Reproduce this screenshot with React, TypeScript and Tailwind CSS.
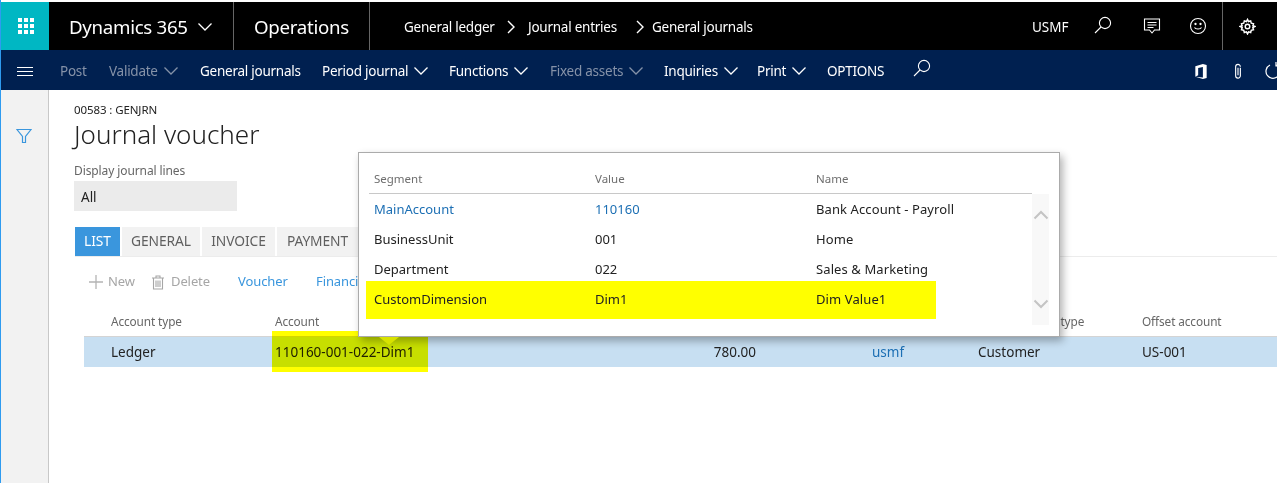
import { ReactNode } from "react";

const FONT = "font-['Noto_Sans','Open_Sans',sans-serif]";

function Chevron({ className = "", weight = 1.3 }: { className?: string; weight?: number }) {
  return (
    <svg viewBox="0 0 16 10" fill="none" stroke="currentColor" strokeWidth={weight} className={`w-[16px] h-[10px] ${className}`}>
      <polyline points="1.5,1.5 8,8 14.5,1.5" />
    </svg>
  );
}

function CrumbArrow() {
  return (
    <svg viewBox="0 0 8 14" fill="none" stroke="#fff" strokeWidth="1.4" className="w-[8px] h-[14px]">
      <polyline points="1,1 7,7 1,13" />
    </svg>
  );
}

function SearchIcon() {
  return (
    <svg viewBox="0 0 18 18" fill="none" stroke="#fff" strokeWidth="1.1" className="w-[18px] h-[18px]">
      <circle cx="11" cy="7" r="5.6" />
      <line x1="7" y1="11" x2="1" y2="17" />
    </svg>
  );
}

function NavItem({ w, dim, arrow, children }: { w: string; dim?: boolean; arrow?: boolean; children: ReactNode }) {
  return (
    <div className={`${w} flex items-center gap-[5px] shrink-0 ${dim ? "text-[#8592a8]" : "text-white"}`}>
      <span>{children}</span>
      {arrow && <Chevron />}
    </div>
  );
}

function TopBar() {
  return (
    <div className="h-[48px] mt-[2px] bg-black flex items-center text-white">
      <div className="w-[49px] h-full bg-[#00b7c3] flex items-center justify-center shrink-0">
        <div className="grid grid-cols-3 gap-[2px] ml-[3px]">
          {[0, 1, 2, 3, 4, 5, 6, 7, 8].map((i) => (
            <div key={i} className="w-[4px] h-[4px] bg-white" />
          ))}
        </div>
      </div>
      <div className="w-[185px] h-full border-r border-[#666] pl-[20px] pt-[2px] flex items-center gap-[9px] shrink-0">
        <span className="text-[18.7px] tracking-[-0.3px]">Dynamics 365</span>
        <Chevron />
      </div>
      <div className="w-[136px] h-full border-r border-[#666] pl-[20px] pt-[2px] flex items-center text-[18.7px] tracking-[-0.3px] shrink-0">
        Operations
      </div>
      <div className="pl-[34px] pt-[2px] flex items-center text-[13.5px] tracking-[-0.25px]">
        <span className="w-[103px]">General ledger</span>
        <CrumbArrow />
        <span className="w-[108px] pl-[13px] box-content">Journal entries</span>
        <div className="w-[16px]">
          <CrumbArrow />
        </div>
        <span>General journals</span>
      </div>
      <div className="ml-auto flex items-center h-full">
        <span className="text-[13.5px] w-[62px] pt-[2px]">USMF</span>
        <div className="w-[49px] -mt-[2px]">
          <SearchIcon />
        </div>
        <svg viewBox="0 0 18 18" fill="none" stroke="#fff" strokeWidth="1.1" className="w-[18px] h-[18px] mr-[28px]">
          <path d="M1.5 2h15v11h-5l-2.5 3-2.5-3h-5z" />
          <path d="M4.5 5.5h9M4.5 8h9M4.5 10.5h6" />
        </svg>
        <svg viewBox="0 0 18 18" fill="none" stroke="#fff" strokeWidth="1.1" className="w-[18px] h-[18px]">
          <circle cx="9" cy="9" r="7.5" />
          <circle cx="6.5" cy="7" r="0.6" fill="#fff" />
          <circle cx="11.5" cy="7" r="0.6" fill="#fff" />
          <path d="M5.5 10.5c1 2 6 2 7 0" />
        </svg>
        <div className="w-[55px] h-full ml-[15px] border-l border-[#666] flex items-center pl-[16px]">
          <svg viewBox="0 0 24 24" fill="none" stroke="#fff" strokeWidth="2" className="w-[17px] h-[17px]">
            <circle cx="12" cy="12" r="3.2" />
            <path d="M12 2l1.5 3 3-1 .8 3.2 3.2.8-1 3 3 1-3 1.5 1 3-3.2.8-.8 3.2-3-1-1.5 3-1.5-3-3 1-.8-3.2-3.2-.8 1-3-3-1.5 3-1-1-3 3.2-.8.8-3.2 3 1z" />
          </svg>
        </div>
      </div>
    </div>
  );
}

function NavBar() {
  return (
    <div className="h-[40px] bg-[#002050] flex items-center pt-[2px] text-[13.5px] tracking-[-0.25px] overflow-hidden">
      <div className="w-[60px] pl-[17px] shrink-0">
        <div className="w-[16px] flex flex-col gap-[3px]">
          <div className="h-px bg-white" />
          <div className="h-px bg-white" />
          <div className="h-px bg-white" />
        </div>
      </div>
      <NavItem w="w-[49px]" dim>Post</NavItem>
      <NavItem w="w-[91px]" dim arrow>Validate</NavItem>
      <NavItem w="w-[122px]">General journals</NavItem>
      <NavItem w="w-[127px]" arrow>Period journal</NavItem>
      <NavItem w="w-[101px]" arrow>Functions</NavItem>
      <NavItem w="w-[114px]" dim arrow>Fixed assets</NavItem>
      <NavItem w="w-[93px]" arrow>Inquiries</NavItem>
      <NavItem w="w-[70px]" arrow>Print</NavItem>
      <NavItem w="w-[86px]">OPTIONS</NavItem>
      <div className="w-[281px] -mt-[6px] shrink-0">
        <SearchIcon />
      </div>
      <svg viewBox="0 0 14 18" fill="#fff" className="w-[14px] h-[17px] shrink-0">
        <path d="M1 3.5L9 1l4 1.2v13.6L9 17l-8-2.5 8 .9V4.2L4 5.4v7.6L1 14.5z" />
      </svg>
      <svg viewBox="0 0 8 18" fill="none" stroke="#fff" strokeWidth="1.2" className="w-[8px] h-[17px] ml-[26px] shrink-0">
        <path d="M6.5 5v8.5a2.5 2.5 0 0 1-5 0V4a2.5 2.5 0 0 1 5 0" />
        <path d="M4 5v8" />
      </svg>
      <svg viewBox="0 0 18 18" fill="none" stroke="#fff" strokeWidth="1.2" className="w-[18px] h-[18px] ml-[22px] shrink-0">
        <path d="M12 3a7 7 0 1 1-6 0" />
        <path d="M12 0v4h4" />
      </svg>
    </div>
  );
}

function Tab({ w, active, children }: { w: string; active?: boolean; children: ReactNode }) {
  return (
    <div
      className={`${w} h-[29px] flex items-center justify-center text-[13.8px] tracking-[-0.1px] shrink-0 ${
        active ? "bg-[#3a96dd] text-white" : "bg-[#f2f2f2] text-[#5f5f5f]"
      }`}
    >
      {children}
    </div>
  );
}

const popupRows = [
  { seg: "MainAccount", val: "110160", name: "Bank Account - Payroll", link: true },
  { seg: "BusinessUnit", val: "001", name: "Home" },
  { seg: "Department", val: "022", name: "Sales & Marketing" },
  { seg: "CustomDimension", val: "Dim1", name: "Dim Value1", mark: true },
];

function SegmentPopup() {
  return (
    <div className="absolute left-[358px] top-[152px] w-[702px] h-[185px] bg-white border border-[#ababab] shadow-[3px_4px_8px_rgba(0,0,0,0.3)] z-20 pt-[15px] pl-[10px] text-[13px]">
      <div className="w-[663px] h-[26px] pt-[2px] border-b border-[#c8c8c8] grid grid-cols-[221px_221px_1fr] pl-[5px] text-[11.5px] text-[#6e6e6e]">
        <span>Segment</span>
        <span>Value</span>
        <span>Name</span>
      </div>
      <div className="flex">
        <div className="w-[663px] relative pt-[1px]">
          {popupRows.map((r) => (
            <div key={r.seg} className="h-[30px] grid grid-cols-[221px_221px_1fr] items-center pl-[5px] text-[#222]">
              <span className={r.link ? "text-[#1c6fb4]" : ""}>{r.seg}</span>
              <span className={r.link ? "text-[#1c6fb4]" : ""}>{r.val}</span>
              <span className="tracking-[0.1px]">{r.name}</span>
              {r.mark && <div className="absolute left-[-3px] top-[87px] w-[570px] h-[38px] bg-[#ffff00] -z-10" />}
            </div>
          ))}
        </div>
        <div className="w-[17px] h-[131px] bg-[#f8f8f8] flex flex-col items-center justify-between py-[16px] text-[#c4c4c4]">
          <Chevron className="rotate-180 w-[13px]" weight={2} />
          <Chevron className="w-[13px]" weight={2} />
        </div>
      </div>
    </div>
  );
}

export default function App() {
  return (
    <div className={`w-[1277px] h-[483px] overflow-hidden bg-white relative ${FONT}`}>
      <TopBar />
      <NavBar />
      <div className="flex h-[393px]">
        <div className="w-[49px] bg-[#f2f2f2] border-r border-[#c8c8c8] flex justify-center pt-[38px] shrink-0">
          <svg viewBox="0 0 16 16" fill="none" stroke="#3a96dd" strokeWidth="1.2" className="w-[16px] h-[16px]">
            <path d="M1 1.5h14L9.5 8.5V14.5h-3V8.5z" />
          </svg>
        </div>
        <div className="flex-1 min-w-0 pl-[25px] pt-[12px]">
          <div className="text-[11.5px] leading-[15px] text-[#222] tracking-[-0.1px]">00583 : GENJRN</div>
          <div className="mt-[2px] text-[26px] leading-[30px] text-[#222] font-light">Journal voucher</div>
          <div className="mt-[14px] text-[12px] leading-[16px] text-[#666] tracking-[-0.1px]">Display journal lines</div>
          <div className="mt-[2px] w-[163px] h-[30px] bg-[#ebebeb] flex items-center pl-[7px] pt-[3px] text-[13.5px] text-[#222]">All</div>
          <div className="mt-[16px] ml-[1px] flex gap-[2px] border-b border-b-[#ececec]">
            <Tab w="w-[45px]" active>LIST</Tab>
            <Tab w="w-[78px]">GENERAL</Tab>
            <Tab w="w-[73px]">INVOICE</Tab>
            <Tab w="w-[81px]">PAYMENT</Tab>
          </div>
          <div className="mt-[14px] ml-[14px] h-[22px] flex items-center text-[13px] tracking-[-0.1px]">
            <svg viewBox="0 0 16 16" stroke="#b4b4b4" strokeWidth="1.3" className="w-[16px] h-[16px]">
              <path d="M8 1v14M1 8h14" />
            </svg>
            <span className="text-[#a6a6a6] ml-[4px] w-[44px]">New</span>
            <svg viewBox="0 0 12 15" fill="none" stroke="#a6a6a6" strokeWidth="1.1" className="w-[12px] h-[15px]">
              <path d="M0 3h12M4 3V1h4v2M1.5 3v11h9V3M4 5.5v6.5M6 5.5v6.5M8 5.5v6.5" />
            </svg>
            <span className="text-[#a6a6a6] ml-[7px] w-[67px]">Delete</span>
            <span className="text-[#3a96dd] w-[78px]">Voucher</span>
            <span className="text-[#3a96dd]">Financials</span>
          </div>
          <div className="mt-[18px] ml-[10px] h-[26px] border-b border-b-[#d4d4d4] grid grid-cols-[27px_164px_703px_164px_1fr] text-[11.8px] leading-[21px] text-[#666] tracking-[-0.1px] items-start">
            <span />
            <span>Account type</span>
            <span>Account</span>
            <span>Offset account type</span>
            <span>Offset account</span>
          </div>
          <div className="ml-[10px] h-[30px] bg-[#c7dff2] grid grid-cols-[27px_164px_200px_281px_116px_106px_164px_1fr] text-[13.5px] text-[#222] items-center">
            <span />
            <span>Ledger</span>
            <span>110160-001-022-Dim1</span>
            <span className="text-right">780.00</span>
            <span />
            <span className="text-[#1c6fb4]">usmf</span>
            <span>Customer</span>
            <span>US-001</span>
          </div>
        </div>
      </div>
      <div className="absolute left-0 top-0 w-px h-full bg-[#2e9bf0] z-40" />
      <div className="absolute left-[272px] top-[331px] w-[156px] h-[41px] bg-[#ffff00] mix-blend-multiply z-10" />
      <SegmentPopup />
      <div className="absolute left-[379px] top-[337px] w-0 h-0 border-x-[10px] border-x-transparent border-t-[8px] border-t-[#d8e200] z-30" />
    </div>
  );
}
